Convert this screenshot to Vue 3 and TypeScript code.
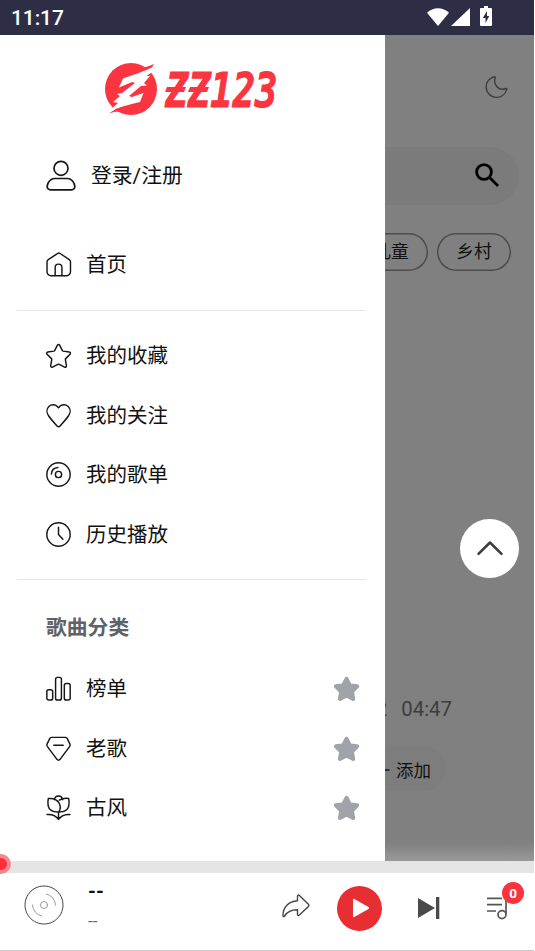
<script setup lang="ts">
interface MenuItem {
  label: string
  icon: string
}

const icons: Record<string, string> = {
  home: 'M9 23.2H4.8a3.8 3.8 0 0 1-3.8-3.8V9.6c0-1 .4-1.7 1.2-2.2l9-5.9c.9-.6 1.7-.6 2.6 0l9 5.9c.8.5 1.2 1.2 1.2 2.2v9.8a3.8 3.8 0 0 1-3.8 3.8H9v-8a3.3 3.3 0 0 1 6.6 0v8',
  star: 'M11 2.1c.5-1 1.6-1 2.1 0l2.5 5c.2.4.5.6.9.7l5.9.9c1.1.2 1.5 1.3.7 2.1l-4.2 4.2c-.3.3-.4.6-.3 1l1 5.8c.2 1.2-.8 1.8-1.8 1.3l-5-2.6a1.7 1.7 0 0 0-1.5 0l-5 2.6c-1 .5-2-.2-1.8-1.3l1-5.8c.1-.4 0-.7-.3-1L1 10.8c-.8-.8-.4-1.9.7-2.1l5.8-.9c.4-.1.7-.3.9-.7z',
  heart: 'M12 4.500C9.500 1.200 5.500.9 3 3.200c-2.600 2.400-2.600 6.200-.6 9 2 2.800 5.200 6.500 8.200 9.900.9.900 2 .9 2.900 0 3-3.400 6.200-7.100 8.200-9.900 2-2.800 2-6.600-.6-9-2.600-2.300-6.600-2-9.100 1.300z',
  disc: 'M.8 12a11.200 11.200 0 1 0 22.400 0a11.200 11.200 0 1 0-22.400 0M9 12a3 3 0 1 0 6 0a3 3 0 1 0-6 0M5.200 11.500c.2-3.500 2.600-6 6.200-6.300',
  clock: 'M.8 12a11.200 11.200 0 1 0 22.400 0a11.200 11.200 0 1 0-22.400 0M12 5v7l4.200 4.500',
  bars: 'M2.600 13.200h2a1.800 1.800 0 0 1 1.800 1.800v6.300a1.800 1.800 0 0 1-1.800 1.800h-2a1.800 1.800 0 0 1-1.800-1.800V15a1.800 1.800 0 0 1 1.800-1.800zM11 1.300h2a1.800 1.800 0 0 1 1.800 1.800v18.200a1.800 1.800 0 0 1-1.800 1.800h-2a1.800 1.800 0 0 1-1.800-1.800V3.100A1.800 1.800 0 0 1 11 1.300zM19.400 7.200h2A1.800 1.800 0 0 1 23.200 9v12.300a1.800 1.800 0 0 1-1.800 1.800h-2a1.800 1.800 0 0 1-1.800-1.800V9a1.800 1.800 0 0 1 1.800-1.800z',
  gem: 'M5.500 1.300h13c.8 0 1.400.4 1.800 1l2.700 5.500c.4.8.3 1.500-.2 2.200L13.500 22.400c-.9 1.100-2.100 1.100-3 0L1.200 10c-.5-.7-.6-1.400-.2-2.200l2.700-5.500c.4-.6 1-1 1.800-1zM7.500 8.800h9',
  rose: 'M8 4.500C8.400 2.200 10 1 12 1s3.600 1.200 4 3.500M12.800 5c2.500-1.600 5.500-2.200 9-1.600.8 4.300.3 8.800-2.300 11-1.700 1.400-4.200 2-7.500 2-3.200 0-5.800-.6-7.500-2C1.900 12.200 1.400 7.700 2.200 3.400 7 2.800 11 4.600 12.800 8.200c1.200 2.500 1.200 5.500-.5 8.200M12 16.500v7M1 18.800c3.500-.2 5.500.3 7.200 1.300 1.300.8 2.500 1.800 3.800 3.300 1.300-1.500 2.500-2.500 3.800-3.300 1.700-1 3.700-1.500 7.200-1.300',
}

const mine: MenuItem[] = [
  { label: '我的收藏', icon: 'star' },
  { label: '我的关注', icon: 'heart' },
  { label: '我的歌单', icon: 'disc' },
  { label: '历史播放', icon: 'clock' },
]
const categories: MenuItem[] = [
  { label: '榜单', icon: 'bars' },
  { label: '老歌', icon: 'gem' },
  { label: '古风', icon: 'rose' },
]
</script>

<template>
  <div class="screen">
    <header class="status">
      <span class="clock">11:17</span>
      <svg class="wifi" viewBox="0 0 22 18"><path d="M11 18 0 4.800C6-1.300 16-1.300 22 4.800z" /></svg>
      <svg class="signal" viewBox="0 0 19 18"><path d="M19 0v18H0z" /></svg>
      <svg class="battery" viewBox="0 0 12 20">
        <path d="M4 0h4v2h3q1 0 1 1v16q0 1-1 1H1q-1 0-1-1V3q0-1 1-1h3z" />
        <path class="bolt" d="M7 5 2.800 12H5.500v5L9.300 10H7z" />
      </svg>
    </header>

    <main class="stage">
      <section class="page">
        <div class="tools">
          <svg class="moon" viewBox="0 0 24 24"><path d="M9.500 1.300C5 2.400 1.200 6.500 1.200 11.800c0 6.200 4.800 11 10.800 11 5 0 9.300-3.300 10.800-8.300.2-.8-.4-1.200-1-.9-3.700 1.500-7.700.4-9.900-2.600-1.800-2.500-2.200-5.700-1.200-8.600.3-.8-.3-1.300-1.200-1.100z" /></svg>
        </div>
        <div class="search">
          <svg viewBox="0 0 24 24"><circle cx="9" cy="9" r="7.400" /><path d="m14.300 14.300 8.800 8.800" /></svg>
        </div>
        <div class="chips"><span class="chip">儿童</span><span class="chip">乡村</span></div>
        <div class="times"><span>03:42</span><span>04:47</span></div>
        <div class="actions"><span class="add"><svg viewBox="0 0 14 14"><path d="M7 0v14M0 7h14" /></svg>添加</span></div>
      </section>

      <div class="fade"></div>

      <button class="totop" aria-label="返回顶部">
        <svg viewBox="0 0 26 14"><path d="M1.500 12.800 13 1.500l11.500 11.300" /></svg>
      </button>

      <aside class="drawer">
        <div class="brand">
          <svg viewBox="0 0 176 54">
            <circle class="red" cx="27" cy="27" r="26" />
            <path class="white" d="M50 4.500Q36 11 19 16.500L15 25.500 28 20 31 21 18 31 13 32 16 34 9 40 14 41 4 50Q18 44 36 40L39.500 31 28 35 25 34 37 24 43 23.500 40 21 46 14 42.500 14 54 6z" />
            <path class="red" d="M30 7Q42 6 50 2L48 5.500Q40 9 30 12zM5 51.500Q12 46 24 43.500V51Q14 48 5 51.500z" />
            <text class="wordmark" x="61.500" y="44.500" textLength="112" lengthAdjust="spacingAndGlyphs">ZZ123</text>
            <path class="red" d="m63 25h19l-2 5H61zM86 25h19l-2 5H84z" />
          </svg>
        </div>
        <a class="row login">
          <svg viewBox="0 0 30 32"><circle cx="15" cy="8.300" r="7" /><path d="M8.500 18.500h13c3.700 0 6.700 3.500 7.300 7.300.3 2.500-1.200 4-3.500 4H4.700c-2.300 0-3.800-1.500-3.500-4 .6-3.800 3.600-7.300 7.300-7.300z" /></svg>
          <span>登录/注册</span>
        </a>
        <nav class="group home">
          <a class="row"><svg viewBox="0 0 24.500 24.500"><path :d="icons.home" /></svg><span>首页</span></a>
        </nav>
        <nav class="group mine">
          <a v-for="item in mine" :key="item.label" class="row">
            <svg viewBox="0 0 24 24"><path :d="icons[item.icon]" /></svg><span>{{ item.label }}</span>
          </a>
        </nav>
        <h2>歌曲分类</h2>
        <nav class="group">
          <a v-for="item in categories" :key="item.label" class="row">
            <svg viewBox="0 0 24 24"><path :d="icons[item.icon]" /></svg><span>{{ item.label }}</span>
            <svg class="fav" viewBox="0 0 24 24"><path :d="icons.star" /></svg>
          </a>
        </nav>
      </aside>
    </main>

    <footer class="player">
      <div class="progress"><i class="knob"></i></div>
      <div class="controls">
        <svg class="cover" viewBox="0 0 40 40"><circle cx="20" cy="20" r="19" stroke-dasharray="4 .7" /><circle class="thin" cx="20" cy="20" r="3.500" /><path class="thin" d="M22.500 9a11.500 11.500 0 0 1 9 11M17.500 31a11.500 11.500 0 0 1-9-11" /></svg>
        <div class="track"><b>--</b><small>--</small></div>
        <svg class="share" viewBox="0 0 28 24"><path d="M15.500 2.300c0-1.200 1-1.600 1.900-.8l9 8.700c.7.700.7 1.500 0 2.200l-9 8.700c-.9.800-1.900.4-1.900-.8v-4.500C9.500 15.700 5.500 17.500 2.600 22c-.6.900-1.600.7-1.600-.5C1 13.500 6.500 7.300 15.500 6.800z" /></svg>
        <button class="play" aria-label="播放"><svg viewBox="0 0 18 20"><path d="M1 1.800v16.400q0 1.400 1.300.7L16.500 10.900q1.300-.9 0-1.800L2.300 1.100Q1 .4 1 1.800z" /></svg></button>
        <svg class="next" viewBox="0 0 22 22"><path d="M0 1v20l17-10zM18 0h3.300v22H18z" /></svg>
        <div class="queue">
          <svg viewBox="0 0 22 24"><path d="M0 2.300h15M0 8.700h15M0 15h9M19 0v18" /><circle cx="15" cy="18.600" r="4" /></svg>
          <span class="badge">0</span>
        </div>
      </div>
    </footer>
  </div>
</template>

<style>
body {
  margin: 0;
  background: #fff;
}
</style>

<style scoped>
* {
  box-sizing: border-box;
}
.screen {
  width: 534px;
  height: 951px;
  display: flex;
  flex-direction: column;
  font-family: Roboto, "Noto Sans CJK SC", sans-serif;
  color: #111;
  overflow: hidden;
}
svg {
  display: block;
  flex: none;
  overflow: visible;
  fill: none;
  stroke: #161616;
  stroke-width: 1.4;
  stroke-linejoin: round;
  stroke-linecap: round;
}
button {
  border: 0;
  padding: 0;
  display: flex;
  align-items: center;
  justify-content: center;
}
.status {
  height: 35px;
  flex: none;
  background: #2d2e45;
  display: flex;
  align-items: center;
  padding: 0 42px 1px 11px;
}
.status svg {
  fill: #fff;
  stroke: none;
}
.clock {
  flex: 1;
  color: #fff;
  font-size: 21px;
  font-weight: 500;
  letter-spacing: -0.1px;
  padding-top: 1px;
}
.wifi {
  width: 22px;
  height: 18px;
}
.signal {
  width: 19px;
  height: 18px;
  margin-left: 2px;
}
.battery {
  width: 12px;
  height: 20px;
  margin: -2px 0 0 10px;
}
.status .bolt {
  fill: #2d2e45;
}
.stage {
  position: relative;
  height: 826px;
  flex: none;
  background: #808080;
}
.page {
  display: flex;
  flex-direction: column;
  padding-top: 40px;
}
.tools {
  display: flex;
  justify-content: flex-end;
  padding-right: 26px;
}
.moon {
  width: 23px;
  height: 24px;
  stroke: #3f3f3f;
  stroke-width: 1.5;
}
.search {
  margin: 48px 15px 0;
  height: 58px;
  border-radius: 29px;
  background: #7b7b7b;
  display: flex;
  align-items: center;
  justify-content: flex-end;
  padding: 0 20px 2px 0;
}
.search svg {
  width: 24px;
  height: 24px;
  stroke: #000;
  stroke-width: 2.8;
  stroke-linecap: butt;
}
.chips {
  display: flex;
  justify-content: flex-end;
  gap: 9px;
  padding: 28px 23px 0;
}
.chip {
  width: 74px;
  height: 38px;
  box-shadow: inset 0 0 0 1.5px #4c4c4c;
  border-radius: 19px;
  font-size: 17.8px;
  line-height: 37px;
  text-align: center;
}
.times {
  display: flex;
  justify-content: flex-end;
  gap: 14px;
  margin-top: 426px;
  padding-right: 82px;
  font-size: 20.4px;
  line-height: 24px;
  color: #3d3d3d;
}
.actions {
  display: flex;
  justify-content: flex-end;
  padding: 25px 88px 0 0;
}
.add {
  display: flex;
  align-items: center;
  gap: 7px;
  height: 45px;
  padding: 2px 15px 0 25px;
  border-radius: 23px;
  background: #7d7d7d;
  font-size: 17.5px;
}
.add svg {
  width: 14px;
  height: 14px;
}
.totop {
  position: absolute;
  right: 15px;
  top: 484px;
  width: 59px;
  height: 59px;
  border-radius: 50%;
  background: #fff;
}
.totop svg {
  width: 26px;
  height: 14px;
  margin-top: -2px;
  stroke: #3c3c3c;
  stroke-width: 2.5;
}
.drawer {
  position: absolute;
  inset: 0 auto 0 0;
  width: 385px;
  background: #fff;
  padding: 27px 19px 0 17px;
  overflow: hidden;
}
.brand {
  display: flex;
  padding-left: 87px;
}
.brand svg {
  width: 176px;
  height: 54px;
  stroke: none;
}
.wordmark {
  font: italic bold 48px "DejaVu Sans Mono", monospace;
  fill: #fb353f;
  stroke: #fb353f;
  stroke-width: 1.2px;
  stroke-linejoin: miter;
}
.red {
  fill: #fb353f;
}
.white {
  fill: #fff;
}
.row {
  display: flex;
  align-items: center;
  height: 59.5px;
  padding: 0 7px 0 29px;
  gap: 15px;
  font-size: 20.5px;
  line-height: 30px;
}
.row svg {
  width: 25px;
  height: 25px;
}
.row span {
  flex: 1;
  padding-top: 1px;
}
.login {
  margin-top: 30px;
}
.login svg {
  width: 30px;
  height: 32px;
  stroke-width: 1.7;
}
.login span {
  font-size: 20.8px;
}
.home {
  padding: 29px 0 16px;
  border-bottom: 1px solid #e6e6e6;
}
.mine {
  padding: 15px 0;
  border-bottom: 1px solid #e6e6e6;
}
h2 {
  margin: 33px 0 16px 29px;
  font-size: 20.8px;
  line-height: 30px;
  font-weight: 700;
  color: #606266;
}
.row .fav {
  fill: #a0a3aa;
  stroke: #a0a3aa;
}
.fade {
  position: absolute;
  inset: auto 0 0 0;
  height: 18px;
  background: linear-gradient(rgb(160 160 160 / 0), rgb(200 200 200 / 0.35));
}
.player {
  height: 90px;
  flex: none;
  display: flex;
  flex-direction: column;
  border-bottom: 1px solid #c9c9c9;
  background: #fff;
}
.progress {
  position: relative;
  z-index: 1;
  height: 12px;
  background: #e5e5e5;
}
.knob {
  position: absolute;
  left: -9px;
  top: -7px;
  width: 20px;
  height: 20px;
  border-radius: 50%;
  border: 4px solid #f2898e;
  background: #fb2f3a;
}
.controls {
  flex: 1;
  display: flex;
  align-items: center;
  padding: 0 25px 7px 24px;
}
.cover {
  width: 40px;
  height: 40px;
  margin-top: -6px;
  stroke-width: 1;
  stroke: #444;
}
.cover .thin {
  stroke: #999;
}
.track {
  flex: 1;
  display: flex;
  flex-direction: column;
  gap: 8px;
  padding: 0 0 5px 24px;
}
.track b {
  font-size: 20px;
  line-height: 22px;
}
.track small {
  font-size: 17px;
  line-height: 22px;
  color: #666;
}
.share {
  width: 28px;
  height: 24px;
  margin-top: -4px;
  stroke: #444;
}
.play {
  width: 45px;
  height: 45px;
  margin-left: 27px;
  border-radius: 50%;
  background: #e72e32;
}
.play svg {
  width: 18px;
  height: 20px;
  margin-left: 3px;
  fill: #fff;
  stroke: none;
}
.next {
  width: 22px;
  height: 22px;
  margin-left: 36px;
  fill: #4a4a4a;
  stroke: none;
}
.queue {
  position: relative;
  margin-left: 47px;
}
.queue svg {
  width: 22px;
  height: 24px;
  stroke: #555;
  stroke-width: 1.7;
  stroke-linecap: butt;
}
.badge {
  position: absolute;
  left: 15px;
  top: -14px;
  width: 22px;
  height: 22px;
  border-radius: 50%;
  background: #fb3340;
  color: #fff;
  font-size: 13.5px;
  font-weight: 700;
  line-height: 22px;
  text-align: center;
}
</style>
